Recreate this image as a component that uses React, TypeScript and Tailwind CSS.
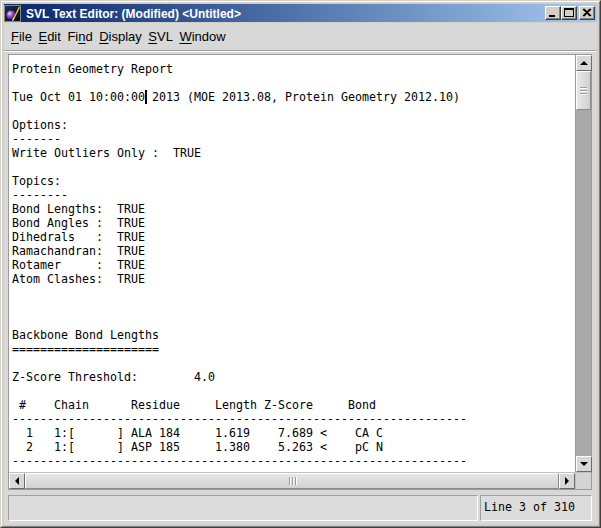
import React from "react";

const mono = { fontFamily: '"DejaVu Sans Mono", "Liberation Mono", monospace' };
const sans = { fontFamily: '"Liberation Sans", Arial, sans-serif' };

const dashes = "-".repeat(65);

const lines: string[] = [
  "Protein Geometry Report",
  "",
  "__CURSOR__",
  "",
  "Options:",
  "-------",
  "Write Outliers Only :  TRUE",
  "",
  "Topics:",
  "--------",
  "Bond Lengths:  TRUE",
  "Bond Angles :  TRUE",
  "Dihedrals   :  TRUE",
  "Ramachandran:  TRUE",
  "Rotamer     :  TRUE",
  "Atom Clashes:  TRUE",
  "",
  "",
  "",
  "Backbone Bond Lengths",
  "=====================",
  "",
  "Z-Score Threshold:        4.0",
  "",
  " #    Chain      Residue     Length Z-Score     Bond",
  dashes,
  "  1   1:[      ] ALA 184     1.619    7.689 <    CA C",
  "  2   1:[      ] ASP 185     1.380    5.263 <    pC N",
  dashes,
];

const menus = [
  { pre: "", key: "F", post: "ile" },
  { pre: "", key: "E", post: "dit" },
  { pre: "Fi", key: "n", post: "d" },
  { pre: "", key: "D", post: "isplay" },
  { pre: "", key: "S", post: "VL" },
  { pre: "", key: "W", post: "indow" },
];

const raised =
  "border border-t-white border-l-white border-r-[#6a6a6a] border-b-[#6a6a6a] bg-[#d8d8d8]";

function AppIcon() {
  return (
    <svg width="17" height="17" viewBox="0 0 17 17">
      <defs>
        <radialGradient id="sph" cx="0.35" cy="0.35" r="0.7">
          <stop offset="0" stopColor="#f0d8ff" />
          <stop offset="0.4" stopColor="#9a5cd0" />
          <stop offset="1" stopColor="#3a1660" />
        </radialGradient>
        <linearGradient id="bgi" x1="0" y1="0" x2="1" y2="1">
          <stop offset="0" stopColor="#1d2f55" />
          <stop offset="1" stopColor="#05070f" />
        </linearGradient>
      </defs>
      <rect x="0.5" y="0.5" width="16" height="16" fill="url(#bgi)" stroke="#8a8a70" />
      <circle cx="7" cy="10" r="4.5" fill="url(#sph)" />
      <path d="M9 15 L15.5 2" stroke="#d8c040" strokeWidth="1.6" />
      <path d="M8.5 16 L10 13" stroke="#f0f0f0" strokeWidth="1" />
    </svg>
  );
}

function TitleButton({ children }: { children: React.ReactNode }) {
  return (
    <div className="w-[16px] h-[14px] border border-t-white border-l-white border-r-[#404040] border-b-[#404040] bg-[#d4d0c8] shadow-[inset_-1px_-1px_0_#808080]">
      <svg width="14" height="12" viewBox="0 0 14 12" className="block">
        {children}
      </svg>
    </div>
  );
}

function ArrowButton({ dir }: { dir: "up" | "down" | "left" | "right" }) {
  const pts = {
    up: "4,10 12,10 8,6",
    down: "4,6 12,6 8,10",
    left: "10,4 10,12 6,8",
    right: "6,4 6,12 10,8",
  }[dir];
  return (
    <div className={`w-[16px] h-[16px] shrink-0 ${raised}`}>
      <svg width="14" height="14" viewBox="1 1 14 14" className="block">
        <polygon points={pts} fill="#000" />
      </svg>
    </div>
  );
}

export default function App() {
  return (
    <div className="w-[601px] h-[528px] bg-[#d4d0c8] border border-t-[#d4d0c8] border-l-[#d4d0c8] border-r-[#404040] border-b-[#404040] overflow-hidden">
      <div className="h-full border border-t-white border-l-white border-r-[#808080] border-b-[#808080] p-[2px] flex flex-col">
        {/* Title bar */}
        <div className="h-[18px] shrink-0 flex items-center bg-linear-to-r from-[#0a246a] to-[#a6caf0]">
          <AppIcon />
          <span className="ml-[5px] mt-[2px] text-white font-bold text-[12px] leading-none" style={sans}>
            SVL Text Editor: (Modified) &lt;Untitled&gt;
          </span>
          <div className="ml-auto mr-[2px] flex items-center">
            <TitleButton>
              <rect x="3" y="8" width="6" height="2" fill="#000" />
            </TitleButton>
            <TitleButton>
              <rect x="2.5" y="1.5" width="9" height="8" fill="none" stroke="#000" />
              <rect x="2" y="1" width="10" height="2" fill="#000" />
            </TitleButton>
            <div className="w-[2px]" />
            <TitleButton>
              <path d="M3 2 L10 9 M4 2 L11 9 M10 2 L3 9 M11 2 L4 9" stroke="#000" strokeWidth="1.2" />
            </TitleButton>
          </div>
        </div>

        {/* Client */}
        <div className="mt-[1px] flex-1 bg-[#d8d8d8] flex flex-col">
          {/* Menu bar */}
          <div className="h-[28px] shrink-0 flex items-center pl-[7px] pt-[1px] gap-[6.5px] text-[13px] text-black border-b border-b-[#a0a0a0]" style={sans}>
            {menus.map((m) => (
              <span key={m.key + m.post}>
                {m.pre}
                <span className="underline underline-offset-2">{m.key}</span>
                {m.post}
              </span>
            ))}
          </div>
          <div className="h-[1px] bg-white shrink-0" />

          {/* Editor panel */}
          <div className="mt-[2px] ml-[4px] mr-[5px] h-[436px] shrink-0 border border-[#9a9a9a] grid grid-cols-[1fr_16px] grid-rows-[1fr_17px]">
            <div className="bg-white pl-[3px] pt-[7px] overflow-hidden text-[11.63px] leading-[14px] text-black whitespace-pre" style={mono}>
              {lines.map((l, i) =>
                l === "__CURSOR__" ? (
                  <div key={i} className="h-[14px]">
                    Tue Oct 01 10:00:00
                    <span className="inline-block w-[2px] h-[14px] bg-black align-top -mr-[2px]" />
                    {" 2013 (MOE 2013.08, Protein Geometry 2012.10)"}
                  </div>
                ) : (
                  <div key={i} className="h-[14px]">
                    {l}
                  </div>
                )
              )}
            </div>

            {/* Vertical scrollbar */}
            <div className="bg-[#a9a9a9] border-l border-l-[#9a9a9a] flex flex-col">
              <ArrowButton dir="up" />
              <div className="h-[39px] border border-t-white border-l-white border-r-[#8a8a8a] border-b-[#8a8a8a] bg-linear-to-r from-[#e8e8e8] to-[#d0d0d0] flex flex-col items-center justify-center gap-[2px]">
                <div className="w-[7px] h-[1px] bg-[#9a9a9a] shadow-[0_1px_0_#fff]" />
                <div className="w-[7px] h-[1px] bg-[#9a9a9a] shadow-[0_1px_0_#fff]" />
                <div className="w-[7px] h-[1px] bg-[#9a9a9a] shadow-[0_1px_0_#fff]" />
              </div>
              <div className="flex-1" />
              <ArrowButton dir="down" />
            </div>

            {/* Horizontal scrollbar */}
            <div className="bg-[#a9a9a9] border-t border-t-[#c0c0c0] flex">
              <ArrowButton dir="left" />
              <div className="flex-1 border border-t-white border-l-white border-r-[#8a8a8a] border-b-[#8a8a8a] bg-linear-to-b from-[#e6e6e6] to-[#d2d2d2] flex items-center justify-center gap-[2px]">
                <div className="w-[1px] h-[8px] bg-[#9a9a9a] shadow-[1px_0_0_#fff]" />
                <div className="w-[1px] h-[8px] bg-[#9a9a9a] shadow-[1px_0_0_#fff]" />
                <div className="w-[1px] h-[8px] bg-[#9a9a9a] shadow-[1px_0_0_#fff]" />
              </div>
              <ArrowButton dir="right" />
            </div>
            <div className="bg-[#d4d4d4] border-t border-l border-[#c0c0c0]" />
          </div>

          {/* Status bar */}
          <div className="mt-[5px] ml-[4px] mr-[5px] h-[26px] shrink-0 flex gap-[2px]">
            <div className="flex-1 border border-t-[#a0a0a0] border-l-[#a0a0a0] border-r-white border-b-white bg-[#dcdcdc]" />
            <div className="w-[112px] border border-t-[#a0a0a0] border-l-[#a0a0a0] border-r-white border-b-white bg-[#dcdcdc] flex items-center pl-[3px] text-[11.63px] text-black whitespace-pre" style={mono}>
              Line 3 of 310
            </div>
          </div>
        </div>
      </div>
    </div>
  );
}
